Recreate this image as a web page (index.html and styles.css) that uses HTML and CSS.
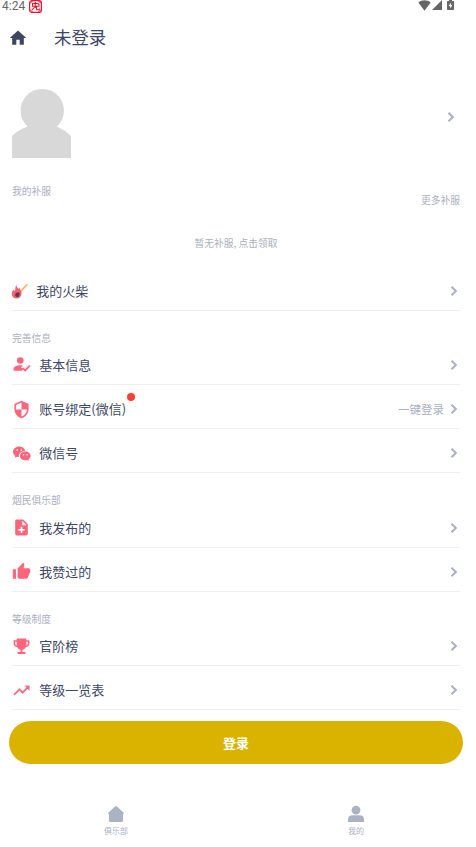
FILE: index.html
```html
<!DOCTYPE html>
<html lang="zh-CN">
<head>
<meta charset="utf-8">
<title>未登录</title>
<link rel="stylesheet" href="styles.css">
</head>
<body>
<svg class="defs" aria-hidden="true">
  <symbol id="chevron" viewBox="0 0 8 12"><path d="M1.500 1.700 5.900 6 1.500 10.300" fill="none" stroke="currentColor" stroke-width="2"/></symbol>
</svg>
<div class="app">
  <div class="status">
    <span class="time">4:24</span>
    <svg class="badge" viewBox="0 0 13 13"><rect x=".6" y=".6" width="11.800" height="11.800" rx="2.500" fill="#fff" stroke="#f0102c" stroke-width="1.200"/><path d="M3.500 3.500h5.500l1 1v1.800H3.500zM6.300 2v6M3 9.800l2.500-2.500M7.500 6.500v3.200h2.800V8.500" fill="none" stroke="#f0102c" stroke-width="1.100"/><path d="M1 3.500 3.500 1M9.500 1 12 3.500M1 9.500 3.500 12M9.500 12 12 9.500" stroke="#f0102c"/></svg>
    <div class="system">
      <svg class="wifi" viewBox="0 0 13 11"><path d="M.3 2.600C3.800-.6 9.200-.6 12.700 2.600L6.500 10.800z"/></svg>
      <svg class="signal" viewBox="0 0 10 10"><path d="M10 0v10H0z"/></svg>
      <svg class="battery" viewBox="0 0 7 10"><path d="M2 0h3v1h1.300q.7 0 .7.700v7.600q0 .7-.7.700H.7Q0 10 0 9.300V1.700Q0 1 .7 1H2z"/><path d="M3.900 2.500 1.700 6h1.500v2.500L5.400 5H3.900z" fill="#fff"/></svg>
    </div>
  </div>
  <header class="header">
    <svg class="home" viewBox="0 0 24 24"><path d="M10 20v-6h4v6h5v-8h3L12 3 2 12h3v8z"/></svg>
    <h1>未登录</h1>
  </header>
  <section class="profile">
    <svg class="avatar" viewBox="0 0 59 70"><path d="M0 70V48Q6 42 15.500 38.500A21.700 21.700 0 1 1 45 38.500Q53 42 59 48V70z" fill="#d8d8d8"/></svg>
    <svg class="chevron"><use href="#chevron"/></svg>
  </section>
  <div class="patch"><span>我的补服</span><span class="more">更多补服</span></div>
  <p class="empty">暂无补服, 点击领取</p>
  <main>
    <div class="row match">
      <svg class="icon" viewBox="0 0 18 18"><path d="M9 10 15.800 2.800" stroke="#f8b26a" stroke-width="1.700" stroke-linecap="round"/><path d="M5.300 3c.2 2 1.500 2.500 2 4l1.200-1.200C9 7.500 10.800 9 10.500 12c-.2 2.600-2.300 4.500-5 4.500C2.700 16.500.8 14.600.8 12c0-2 .8-3.400 1.700-4.300L3.700 9C4.800 7 4 4.800 5.300 3z" fill="#f9606e"/><path d="M4 13.500q0-2.800 2.500-3.300l1.800.3.500 1.500-1 2.500q-2 1.500-3.800-1z" fill="#4d4255"/></svg>
      <span class="label">我的火柴</span><svg class="chevron"><use href="#chevron"/></svg>
    </div>
    <h2>完善信息</h2>
    <div class="row">
      <svg class="icon" viewBox="0 0 24 24"><circle cx="10.500" cy="7" r="4.200"/><path d="M2 20v-2.500C2 14.500 6 13 10.500 13q1.800 0 3.300.3L11.500 15.600 14 18.200 12.300 20z"/><path d="m13.300 16.300 3.300 3.200 6-6" fill="none" stroke="currentColor" stroke-width="2.200"/></svg>
      <span class="label">基本信息</span><svg class="chevron"><use href="#chevron"/></svg>
    </div>
    <div class="row">
      <svg class="icon" viewBox="0 0 24 24"><path d="M12 1 3 5v6c0 5.550 3.840 10.740 9 12 5.160-1.260 9-6.450 9-12V5l-9-4zm0 10.990h7c-.53 4.120-3.280 7.790-7 8.940V12H5V6.300l7-3.110v8.800z"/></svg>
      <span class="label">账号绑定(微信)<i class="dot"></i></span><span class="hint">一键登录</span><svg class="chevron"><use href="#chevron"/></svg>
    </div>
    <div class="row">
      <svg class="icon" viewBox="0 0 24 24"><path d="M9.300 3C4.800 3 1.200 6 1.200 9.800c0 2.100 1.200 4 3 5.200l-.7 2.400 2.800-1.400c.8.200 1.500.4 2.500.4-.9-4.300 3-7.700 8-7.600C16.100 5.400 13 3 9.300 3z"/><path d="M23.500 15c0-3.100-3.100-5.500-6.700-5.500S10 11.900 10 15s3.100 5.500 6.800 5.500c.8 0 1.600-.1 2.300-.4l2.300 1.300-.6-2c1.600-1.100 2.700-2.600 2.700-4.400z"/><g fill="#fff"><circle cx="6.500" cy="7.700" r="1"/><circle cx="11.800" cy="7.700" r="1"/><circle cx="14.600" cy="13.500" r=".9"/><circle cx="19" cy="13.500" r=".9"/></g></svg>
      <span class="label">微信号</span><svg class="chevron"><use href="#chevron"/></svg>
    </div>
    <h2>烟民俱乐部</h2>
    <div class="row">
      <svg class="icon" viewBox="0 0 24 24"><path d="M14 2H6c-1.100 0-2 .9-2 2v16c0 1.100.9 2 2 2h12c1.100 0 2-.9 2-2V8l-6-6zm2 14h-3v3h-2v-3H8v-2h3v-3h2v3h3v2zm-3-7V3.500L18.500 9H13z"/></svg>
      <span class="label">我发布的</span><svg class="chevron"><use href="#chevron"/></svg>
    </div>
    <div class="row">
      <svg class="icon" viewBox="0 0 24 24"><path d="M1 21h4V9H1v12zm22-11c0-1.100-.9-2-2-2h-6.310l.95-4.570.03-.32c0-.41-.17-.79-.44-1.060L14.170 1 7.590 7.590C7.220 7.950 7 8.450 7 9v10c0 1.100.9 2 2 2h9c.83 0 1.540-.5 1.840-1.220l3.020-7.050c.09-.23.140-.47.140-.73v-2z"/></svg>
      <span class="label">我赞过的</span><svg class="chevron"><use href="#chevron"/></svg>
    </div>
    <h2>等级制度</h2>
    <div class="row">
      <svg class="icon" viewBox="0 0 24 24"><path d="M18 4V2H6v2H2v4c0 3 2 4.700 4.600 5 .9 1.800 2.400 2.900 4.200 3.300V19H7v2.500h10V19h-3.800v-2.700c1.800-.4 3.300-1.500 4.200-3.300C20 12.700 22 11 22 8V4zM4 8V6h2v4.800C4.800 10.400 4 9.500 4 8zm16 0c0 1.500-.8 2.400-2 2.800V6h2z"/></svg>
      <span class="label">官阶榜</span><svg class="chevron"><use href="#chevron"/></svg>
    </div>
    <div class="row">
      <svg class="icon" viewBox="0 0 24 24"><path d="m16 6 2.290 2.290-4.880 4.880-4-4L2 16.590 3.410 18l6-6 4 4 6.300-6.290L22 12V6z" stroke="currentColor" stroke-width=".3"/></svg>
      <span class="label">等级一览表</span><svg class="chevron"><use href="#chevron"/></svg>
    </div>
  </main>
  <button class="login">登录</button>
  <nav class="tabs">
    <a><svg viewBox="0 0 18 18"><path d="M8 1.400q1-.8 2 0l6.700 6.300q.8 1.300-.5 1.600l-.2.200v6q0 1.500-1.500 1.500h-11Q2 17 2 15.500v-6l-.2-.2q-1.300-.3-.5-1.600z"/></svg><span>俱乐部</span></a>
    <a><svg viewBox="0 0 18 18"><circle cx="9" cy="5.200" r="4.400"/><path d="M1 17v-2.500q0-4.300 4.500-4.300h7q4.500 0 4.500 4.300V17z"/></svg><span>我的</span></a>
  </nav>
</div>
</body>
</html>
```

FILE: styles.css
```css
* { box-sizing: border-box; }
body { margin: 0; background: #fff; color: #3d4764; font-family: "Noto Sans CJK SC", sans-serif; }
svg { display: block; flex: none; fill: currentColor; }
.defs { position: absolute; width: 0; height: 0; }
.app { width: 472px; height: 847px; display: flex; flex-direction: column; overflow: hidden; }
.status { height: 12px; display: flex; align-items: center; padding: 0 18px 0 2px; color: #666; flex: none; }
.time { font: 400 12px/12px Roboto, sans-serif; width: 27px; }
.badge { width: 13px; height: 13px; }
.system { margin-left: auto; display: flex; align-items: center; margin-top: -2px; }
.wifi { width: 13px; height: 11px; }
.signal { width: 10px; height: 10px; margin-left: 1px; }
.battery { width: 7px; height: 10px; margin-left: 5px; }
.header { height: 51px; flex: none; display: flex; align-items: center; padding-left: 8px; }
.home { width: 20px; height: 20px; }
h1 { margin: -2px 0 0 26px; font-size: 17.4px; line-height: 26px; font-weight: 400; }
.profile { height: 107px; flex: none; display: flex; justify-content: space-between; align-items: center; padding: 0 17px 0 12px; }
.avatar { width: 59px; height: 70px; margin-top: 12px; }
.chevron { width: 8px; height: 12px; color: #a9b0c0; }
.patch { height: 49px; flex: none; display: flex; justify-content: space-between; padding: 14px 12px 0; font-size: 9.75px; line-height: 14px; color: #aab0c0; }
.more { margin-top: 9px; }
.empty { margin: 0; height: 47px; flex: none; padding-top: 17px; text-align: center; font-size: 9.75px; line-height: 14px; color: #aab0c0; }
main { padding: 0 12px; flex: none; }
.row { height: 44.25px; display: flex; align-items: center; border-bottom: 1px solid #eceef0; padding: 5px 2px 0 0; }
.match { height: 44.7px; padding-top: 6px; }
.icon { width: 19px; height: 19px; color: #fb667d; }
.match .icon { width: 18px; height: 18px; margin: 0 -1px 0 -1px; }
.label { position: relative; margin-left: 8.3px; font-size: 13px; line-height: 20px; }
.row .chevron { margin-left: auto; }
.hint { margin-left: auto; font-size: 11.5px; color: #a9b0c0; }
.row .hint + .chevron { margin-left: 6px; }
.dot { position: absolute; width: 8px; height: 8px; right: -8.5px; top: -6px; border-radius: 50%; background: #f44336; }
h2 { margin: 0; height: 30px; padding-top: 20px; font-size: 9.75px; line-height: 14px; font-weight: 400; color: #aab0c0; }
.login { flex: none; height: 43px; margin: 11px 9px 0; border: 0; border-radius: 22px; background: #d9b300; color: #fff; font: 700 13px/20px "Noto Sans CJK SC", sans-serif; padding: 0; }
.tabs { display: flex; margin: 41px -4px 0; color: #abb2c1; }
.tabs a { flex: 1; display: flex; flex-direction: column; align-items: center; font-size: 8px; line-height: 12px; }
.tabs svg { width: 18px; height: 18px; margin-bottom: 2px; }
```
